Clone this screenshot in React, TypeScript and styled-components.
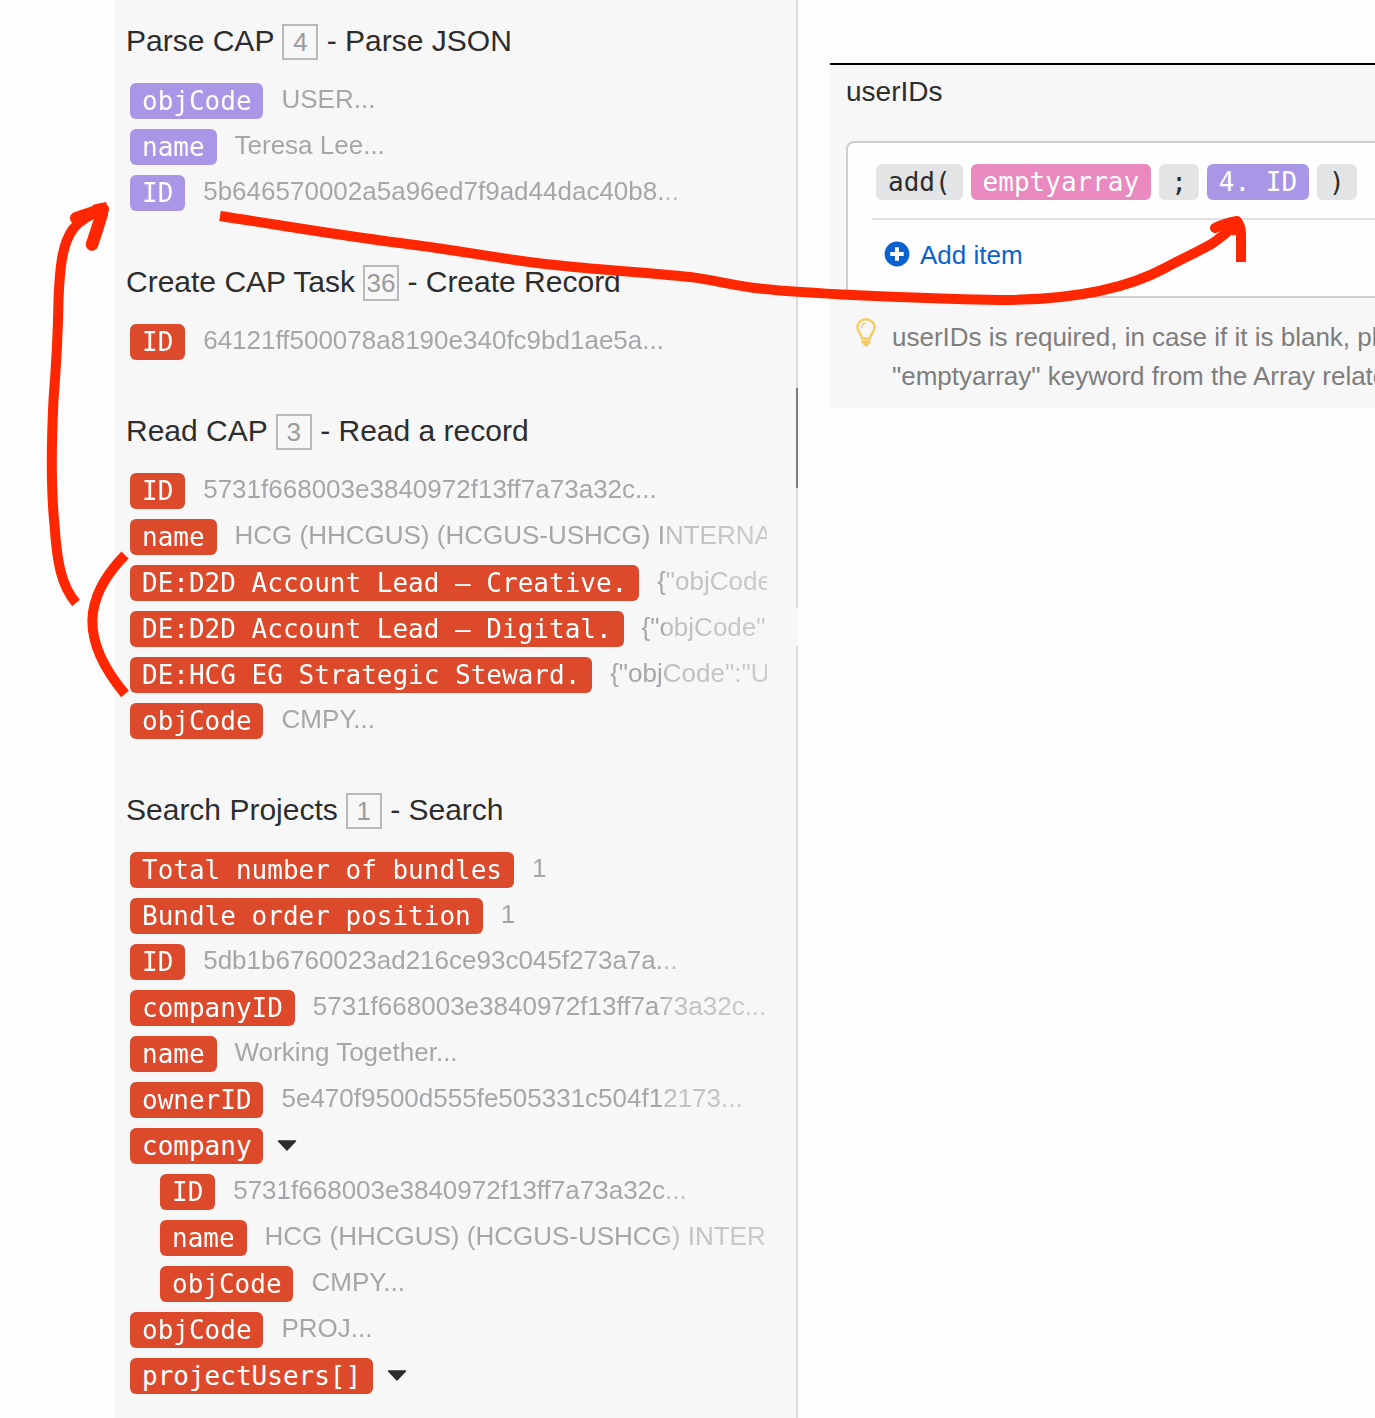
import React from 'react';
import styled, { createGlobalStyle, css } from 'styled-components';

const sans = "'Liberation Sans', Arial, sans-serif";
const mono = "'DejaVu Sans Mono', monospace";

const colors = {
  violet: '#a996e6',
  red: '#dc4a2b',
  pink: '#ea88c0',
  grey: '#e2e4e6',
  panel: '#f7f7f7',
  pen: '#ff2600',
};
type Tone = 'violet' | 'red' | 'pink' | 'grey';

interface IField {
  name: string;
  value?: string;
  children?: IField[];
  expandable?: boolean;
}

interface IModule {
  title: string;
  id: number;
  action: string;
  tone: Tone;
  fields: IField[];
}

const modules: IModule[] = [
  {
    title: 'Parse CAP',
    id: 4,
    action: 'Parse JSON',
    tone: 'violet',
    fields: [
      { name: 'objCode', value: 'USER...' },
      { name: 'name', value: 'Teresa Lee...' },
      { name: 'ID', value: '5b646570002a5a96ed7f9ad44dac40b8...' },
    ],
  },
  {
    title: 'Create CAP Task',
    id: 36,
    action: 'Create Record',
    tone: 'red',
    fields: [{ name: 'ID', value: '64121ff500078a8190e340fc9bd1ae5a...' }],
  },
  {
    title: 'Read CAP',
    id: 3,
    action: 'Read a record',
    tone: 'red',
    fields: [
      { name: 'ID', value: '5731f668003e3840972f13ff7a73a32c...' },
      { name: 'name', value: 'HCG (HHCGUS) (HCGUS-USHCG) INTERNA' },
      { name: 'DE:D2D Account Lead – Creative.', value: '{"objCode' },
      { name: 'DE:D2D Account Lead – Digital.', value: '{"objCode"' },
      { name: 'DE:HCG EG Strategic Steward.', value: '{"objCode":"U' },
      { name: 'objCode', value: 'CMPY...' },
    ],
  },
  {
    title: 'Search Projects',
    id: 1,
    action: 'Search',
    tone: 'red',
    fields: [
      { name: 'Total number of bundles', value: '1' },
      { name: 'Bundle order position', value: '1' },
      { name: 'ID', value: '5db1b6760023ad216ce93c045f273a7a...' },
      { name: 'companyID', value: '5731f668003e3840972f13ff7a73a32c...' },
      { name: 'name', value: 'Working Together...' },
      { name: 'ownerID', value: '5e470f9500d555fe505331c504f12173...' },
      {
        name: 'company',
        expandable: true,
        children: [
          { name: 'ID', value: '5731f668003e3840972f13ff7a73a32c...' },
          { name: 'name', value: 'HCG (HHCGUS) (HCGUS-USHCG) INTER' },
          { name: 'objCode', value: 'CMPY...' },
        ],
      },
      { name: 'objCode', value: 'PROJ...' },
      { name: 'projectUsers[]', expandable: true },
    ],
  },
];

const renderField = (field: IField, tone: Tone) => (
  <React.Fragment key={field.name}>
    <StyledRow>
      <StyledPill $tone={tone}>{field.name}</StyledPill>
      {field.value && <StyledValue>{field.value}</StyledValue>}
      {field.expandable && (
        <StyledCaret viewBox="0 0 20 12">
          <path d="M1.5 1h17L10 10z" />
        </StyledCaret>
      )}
    </StyledRow>
    {field.children && (
      <StyledFields $nested>
        {field.children.map(child => renderField(child, tone))}
      </StyledFields>
    )}
  </React.Fragment>
);

const App: React.FC = () => (
  <StyledPage>
    <GlobalStyle />
    <StyledSidebar>
      <StyledModules>
        {modules.map(item => (
          <section key={item.id}>
            <StyledHeading>
              <span>{item.title}</span>
              <StyledNumber>{item.id}</StyledNumber>
              <span>- {item.action}</span>
            </StyledHeading>
            <StyledFields>
              {item.fields.map(field => renderField(field, item.tone))}
            </StyledFields>
          </section>
        ))}
      </StyledModules>
      <StyledTrack>
        <StyledThumb />
      </StyledTrack>
    </StyledSidebar>

    <StyledEditor>
      <StyledLabel>userIDs</StyledLabel>
      <StyledArrayBox>
        <StyledFormula>
          <StyledPill $tone="grey">add(</StyledPill>
          <StyledPill $tone="pink">emptyarray</StyledPill>
          <StyledPill $tone="grey">;</StyledPill>
          <StyledPill $tone="violet">4. ID</StyledPill>
          <StyledPill $tone="grey">)</StyledPill>
        </StyledFormula>
        <StyledAddItem>
          <StyledPlus viewBox="0 0 26 26">
            <circle cx="13" cy="13" r="12.4" fill="#0b62cf" />
            <path d="M13 6.3v13.4M6.3 13h13.4" stroke="#fff" strokeWidth="4" />
          </StyledPlus>
          Add item
        </StyledAddItem>
      </StyledArrayBox>
      <StyledHint>
        <StyledBulb viewBox="0 0 20 30">
          <path d="M6.2 20.5C6 16.500 1.400 14 1.400 9.300a8.600 8.100 0 0 1 17.200 0C18.600 14 14 16.500 13.800 20.500z" />
          <path d="M5.500 10c0-2.800 1.800-4.500 4.200-4.700" strokeWidth="1.500" />
          <path d="M5.500 24h9M7.500 26.500h5" strokeWidth="3.400" />
        </StyledBulb>
        <div>
          userIDs is required, in case if it is blank, please use
          <br />
          "emptyarray" keyword from the Array related
        </div>
      </StyledHint>
    </StyledEditor>

    {/* hand-drawn arrows over both panels */}
    <StyledMarks viewBox="0 0 1375 1418">
      <path d="M76 603C61 585 57 562 54.500 525C51 490 51 450 53.500 400C57 355 58 335 58.500 300C60 262 63 243 73 229C80 220 88 216 105 209" />
      <path d="M103 209L76 218" strokeWidth="12" strokeLinecap="round" />
      <path d="M102 213Q98 227 92 244.500" strokeWidth="12.500" strokeLinecap="round" />
      <path d="M92 205L106 202L109 211L104 214z" fill={colors.pen} stroke="none" />
      <path d="M125 555C83 598 80 640 125 694" />
      <path d="M220 216C280 225 330 234 400 243C470 252 500 259 550 264.500C600 270 640 272 690 277C715 280 735 286 760 288.500C800 293 900 298 1000 300C1080 300 1130 287 1165 268C1185 257 1202 250 1213 243C1223 236 1230 230 1236 223" />
      <path d="M1215 228Q1225 223 1237 221" strokeLinecap="round" />
      <path d="M1237 221Q1241 226 1241 234V262M1231 231L1240 228" />
    </StyledMarks>
  </StyledPage>
);
export default App;

const GlobalStyle = createGlobalStyle`
  body {
    margin: 0;
    background: #fdfdfd;
  }
`;

const StyledPage = styled.div`
  position: relative;
  display: flex;
  align-items: flex-start;
  box-sizing: border-box;
  width: 1375px;
  height: 1418px;
  padding-left: 115px;
  overflow: hidden;
  font-family: ${sans};
  font-size: 26px;
  color: #2d2d2d;
`;

const StyledSidebar = styled.aside`
  display: flex;
  flex-shrink: 0;
  justify-content: space-between;
  width: 683px;
  height: 1418px;
  background: ${colors.panel};
`;

const StyledModules = styled.div`
  display: flex;
  flex-direction: column;
  gap: 54px;
  width: 652px;
  padding-top: 24px;
`;

const StyledTrack = styled.div`
  width: 2px;
  padding-top: 388px;
  box-sizing: border-box;
  background: linear-gradient(#dcdcdc 608px, #f7f7f7 608px, #f7f7f7 646px, #dcdcdc 646px);
`;

const StyledThumb = styled.div`
  height: 100px;
  background: #7b7b7b;
`;

const StyledHeading = styled.h2`
  display: flex;
  align-items: center;
  height: 36px;
  margin: 0 0 23px 11px;
  font-size: 30px;
  font-weight: 400;
  line-height: 34px;

  > span:first-child,
  > span:last-child {
    padding-bottom: 2px;
  }
`;

const StyledNumber = styled.span`
  box-sizing: border-box;
  width: 36px;
  height: 36px;
  margin: 0 8.4px 0 8px;
  border: 2px solid #b9b9b9;
  color: #9b9b9b;
  font-size: 26px;
  line-height: 32px;
  text-align: center;
`;

const StyledFields = styled.div<{ $nested?: boolean }>`
  display: flex;
  flex-direction: column;
  gap: 10px;
  padding-left: 15px;

  ${props => !props.$nested && css`
    mask-image: linear-gradient(90deg, #000 549px, rgba(0, 0, 0, 0.7) 551px, rgba(0, 0, 0, 0.55) 652px);
  `}

  ${props => props.$nested && css`
    padding-left: 30px;
  `}
`;

const StyledRow = styled.div`
  display: flex;
  align-items: center;
  height: 36px;
  overflow: hidden;
`;

const toneStyle = {
  violet: css`background: ${colors.violet}; color: #fff;`,
  red: css`background: ${colors.red}; color: #fff;`,
  pink: css`background: ${colors.pink}; color: #fff;`,
  grey: css`background: ${colors.grey}; color: #2d2d2d;`,
};
const StyledPill = styled.span<{ $tone: Tone }>`
  flex-shrink: 0;
  height: 36px;
  padding: 0 11.9px 0 12px;
  border-radius: 6px;
  font-family: ${mono};
  font-size: 26px;
  line-height: 36px;
  white-space: pre;
  ${props => toneStyle[props.$tone]}
`;

const StyledValue = styled.span`
  margin-left: 18px;
  padding-bottom: 3px;
  color: #a4a7a9;
  white-space: nowrap;
`;

const StyledCaret = styled.svg`
  width: 20px;
  height: 12px;
  margin-left: 14px;
  fill: #2d2d2d;
  stroke: #2d2d2d;
  stroke-width: 1.5;
  stroke-linejoin: round;
`;

const StyledEditor = styled.main`
  flex-shrink: 0;
  box-sizing: border-box;
  width: 620px;
  height: 345px;
  margin: 63px 0 0 32px;
  padding-left: 16px;
  border-top: 2px solid #000;
  background: ${colors.panel};
`;

const StyledLabel = styled.div`
  height: 76px;
  font-size: 28px;
  line-height: 53px;
`;

const StyledArrayBox = styled.div`
  box-sizing: border-box;
  height: 157px;
  padding-left: 24px;
  border: 2px solid #cfcfcf;
  border-radius: 8px;
  background: #fefefe;
`;

const StyledFormula = styled.div`
  display: flex;
  gap: 8.1px;
  box-sizing: border-box;
  height: 77px;
  padding: 21px 0 0 4px;
  border-bottom: 2px solid #e0e0e0;
`;

const StyledAddItem = styled.div`
  display: flex;
  align-items: center;
  gap: 10px;
  height: 71px;
  padding-left: 12px;
  color: #0b62cf;
`;

const StyledPlus = styled.svg`
  width: 26px;
  height: 26px;
  margin-bottom: 3px;
`;

const StyledHint = styled.div`
  display: flex;
  gap: 16px;
  padding: 20px 0 0 10px;
  color: #7d7d7d;
  line-height: 39px;
  white-space: nowrap;
`;

const StyledBulb = styled.svg`
  flex-shrink: 0;
  width: 20px;
  height: 30px;
  fill: none;
  stroke: #f6cc62;
  stroke-width: 2.4;
`;

const StyledMarks = styled.svg`
  position: absolute;
  inset: 0;
  width: 1375px;
  height: 1418px;
  fill: none;
  stroke: ${colors.pen};
  stroke-width: 10;
  stroke-linejoin: round;
  pointer-events: none;
`;
